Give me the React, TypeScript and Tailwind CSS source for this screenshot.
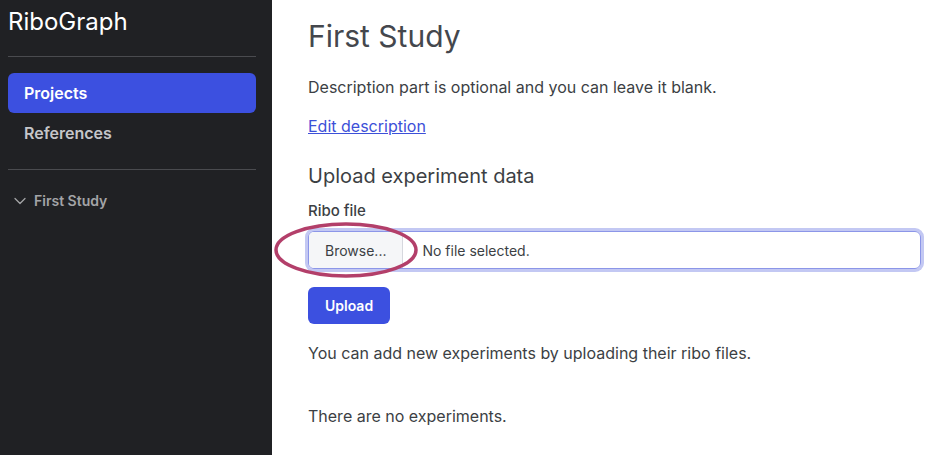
import { ChevronDown } from 'lucide-react'

const navItems = [
  { label: 'Projects', active: true },
  { label: 'References', active: false },
]

export default function App() {
  return (
    <div className="flex h-[455px] w-[948px] overflow-hidden bg-white font-['Inter',sans-serif]">
      <aside className="flex w-[272px] shrink-0 flex-col bg-[#202124] pl-2 pr-4">
        <div className="pb-[18px] pt-[6px] text-[24px] leading-[32px] text-white">RiboGraph</div>
        <div className="h-px bg-[#4a4b4f]" />
        <nav className="flex flex-col py-4">
          {navItems.map((item) => (
            <div
              key={item.label}
              className={
                item.active
                  ? 'flex h-10 items-center rounded-md bg-[#3c50e0] px-4 text-[16px] font-semibold text-white'
                  : 'flex h-10 items-center px-4 text-[16px] font-semibold text-[#c5c6c9]'
              }
            >
              {item.label}
            </div>
          ))}
        </nav>
        <div className="h-px bg-[#4a4b4f]" />
        <div className="flex items-center gap-[4px] pl-[2px] pt-[20px] text-[14px] font-semibold text-[#a3a4a7]">
          <ChevronDown size={20} strokeWidth={1.5} />
          First Study
        </div>
      </aside>
      <main className="flex-1 pl-9 pr-[27px] pt-[16px] text-[#3c3f44]">
        <h1 className="text-[30px] leading-[40px] text-[#44474d]">First Study</h1>
        <p className="mt-[19px] text-[16px] leading-[24px]">Description part is optional and you can leave it blank.</p>
        <a href="#" className="mt-[15px] inline-block text-[16px] leading-[24px] text-[#3c50d8] underline">
          Edit description
        </a>
        <h2 className="mt-[23px] text-[20px] leading-[30px] text-[#3c3f44]">Upload experiment data</h2>
        <div className="mt-[9px] text-[15px] font-medium leading-[22px]">Ribo file</div>
        <div className="relative mt-[9px]">
          <div className="flex h-[38px] items-center overflow-hidden rounded-md border border-[#8c96e8] text-[14px] shadow-[0_0_0_3px_#c3c8f3]">
            <div className="flex h-full items-center border-r border-[#d6d8de] bg-[#f5f6f8] px-4 text-[#3c3f44]">Browse...</div>
            <div className="px-[19px] text-[#3c3f44]">No file selected.</div>
          </div>
          <svg className="pointer-events-none absolute left-[-36px] top-[-12px]" width="150" height="62" viewBox="0 0 150 62">
            <ellipse cx="74" cy="31" rx="70" ry="26" fill="none" stroke="#b33f6a" strokeWidth="3.5" />
          </svg>
        </div>
        <button className="mt-[18px] h-[37px] rounded-md bg-[#3c50e0] px-[17px] text-[14px] font-semibold text-white">Upload</button>
        <p className="mt-[17px] text-[16px] leading-[24px]">You can add new experiments by uploading their ribo files.</p>
        <p className="mt-[39px] text-[16px] leading-[24px]">There are no experiments.</p>
      </main>
    </div>
  )
}
